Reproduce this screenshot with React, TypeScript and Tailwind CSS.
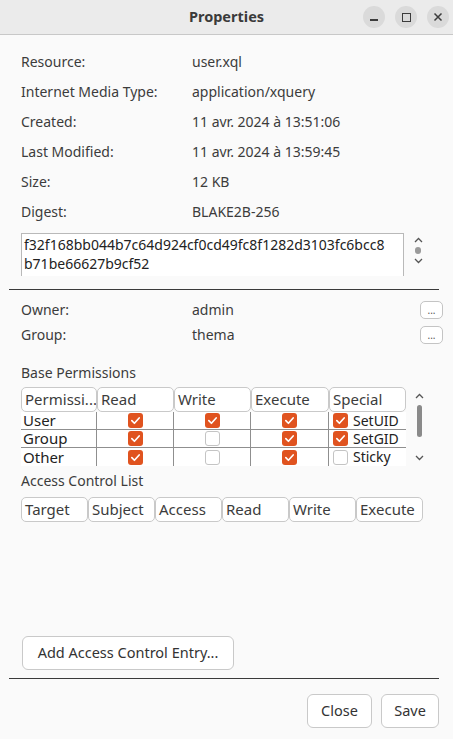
import React from 'react';

const font = { fontFamily: '"Noto Sans", "Open Sans", sans-serif' };

function Check({ on }: { on: boolean }) {
  if (!on) {
    return <span className="inline-block shrink-0 w-[15px] h-[15px] rounded-[3px] border border-[#c4c4c4] bg-white" />;
  }
  return (
    <span className="inline-flex shrink-0 w-[15px] h-[15px] rounded-[3px] bg-[#e0531f] items-center justify-center">
      <svg width="11" height="11" viewBox="0 0 12 12" fill="none">
        <path d="M2 6.2 L4.8 9 L10 3.2" stroke="white" strokeWidth="1.8" strokeLinecap="round" strokeLinejoin="round" />
      </svg>
    </span>
  );
}

function InfoRow({ label, value }: { label: string; value: string }) {
  return (
    <div className="flex items-center h-[30px]">
      <span className="w-[171px] shrink-0">{label}</span>
      <span>{value}</span>
    </div>
  );
}

function Header({ label, w }: { label: string; w: string }) {
  return (
    <div className={`${w} h-[25px] shrink-0 rounded-[5px] border border-[#c9c9c9] bg-white px-[3px] flex items-center truncate text-[15px]`}>
      {label}
    </div>
  );
}

export default function App() {
  const perms = [
    { name: 'User', r: true, w: true, x: true, s: true, sl: 'SetUID' },
    { name: 'Group', r: true, w: false, x: true, s: true, sl: 'SetGID' },
    { name: 'Other', r: true, w: false, x: true, s: false, sl: 'Sticky' },
  ];
  const permCols = ['w-[76px]', 'w-[77px]', 'w-[77px]', 'w-[78px]', 'w-[77px]'];
  const aclCols = ['Target', 'Subject', 'Access', 'Read', 'Write', 'Execute'];

  return (
    <div className="w-[453px] h-[739px] bg-[#fafafa] text-[#3c3c3c] text-[14px] flex flex-col" style={font}>
      {/* title bar */}
      <div className="h-[35px] shrink-0 bg-[#ebebeb] border-b border-[#c8c8c8] grid grid-cols-[1fr_auto_1fr] items-center">
        <div />
        <div className="font-bold text-[14.5px] text-[#3a3a3a]">Properties</div>
        <div className="flex justify-end gap-[10px] pr-[4px]">
          <button className="w-[22px] h-[22px] rounded-full bg-[#dadada] flex items-center justify-center">
            <span className="block w-[8px] h-[1.5px] bg-[#3c3c3c] mt-[6px]" />
          </button>
          <button className="w-[22px] h-[22px] rounded-full bg-[#dadada] flex items-center justify-center">
            <span className="block w-[9px] h-[9px] border-[1.5px] border-[#3c3c3c]" />
          </button>
          <button className="w-[22px] h-[22px] rounded-full bg-[#dadada] flex items-center justify-center">
            <svg width="10" height="10" viewBox="0 0 10 10">
              <path d="M1.5 1.5 L8.5 8.5 M8.5 1.5 L1.5 8.5" stroke="#3c3c3c" strokeWidth="1.5" />
            </svg>
          </button>
        </div>
      </div>

      <div className="flex-1 flex flex-col px-[9px]">
        <div className="px-[12px] pt-[11px]">
          <InfoRow label="Resource:" value="user.xql" />
          <InfoRow label="Internet Media Type:" value="application/xquery" />
          <InfoRow label="Created:" value="11 avr. 2024 à 13:51:06" />
          <InfoRow label="Last Modified:" value="11 avr. 2024 à 13:59:45" />
          <InfoRow label="Size:" value="12 KB" />
          <InfoRow label="Digest:" value="BLAKE2B-256" />

          <div className="flex mt-[7px]">
            <div className="w-[383px] h-[43px] border-t border-x border-[#b9b9b9] bg-white px-[2px] pt-[1px] leading-[19px] text-[#222] whitespace-nowrap overflow-hidden">
              <div>f32f168bb044b7c64d924cf0cd49fc8f1282d3103fc6bcc8</div>
              <div>b71be66627b9cf52</div>
            </div>
            <div className="flex-1 flex flex-col items-center pt-[4px] gap-[2px] text-[#555]">
              <svg width="9" height="6" viewBox="0 0 9 6"><path d="M1 5 L4.5 1.5 L8 5" stroke="#555" strokeWidth="1.3" fill="none" /></svg>
              <span className="block w-[6px] h-[7px] rounded-full bg-[#9a9a9a] my-[2px]" />
              <svg width="9" height="6" viewBox="0 0 9 6"><path d="M1 1 L4.5 4.5 L8 1" stroke="#555" strokeWidth="1.3" fill="none" /></svg>
            </div>
          </div>
        </div>

        <div className="h-px bg-[#3a3a3a] mt-[13px] mr-[5px]" />

        <div className="pl-[12px] pr-[1px] pt-[7px]">
          {['Owner:|admin', 'Group:|thema'].map((row) => {
            const [l, v] = row.split('|');
            return (
              <div key={l} className="flex items-center h-[25px]">
                <span className="w-[171px] shrink-0">{l}</span>
                <span className="flex-1">{v}</span>
                <button className="w-[23px] h-[18px] rounded-[5px] border border-[#c4c4c4] bg-white text-[10px] leading-[10px] text-[#555] flex items-end justify-center pb-[3px]">
                  ...
                </button>
              </div>
            );
          })}
        </div>

        <div className="px-[12px]">
          <div className="mt-[15px] h-[20px] flex items-center">Base Permissions</div>

          <div className="flex mt-[5px]">
            <div className="w-[385px] flex flex-col">
              <div className="flex">
                {['Permissions', 'Read', 'Write', 'Execute', 'Special'].map((h, i) => (
                  <Header key={h} label={h === 'Permissions' ? 'Permissi...' : h} w={permCols[i]} />
                ))}
              </div>
              <div className="bg-white text-[15px] text-[#222]">
                {perms.map((p, ri) => (
                  <div key={p.name} className={`flex h-[18px] ${ri < 2 ? 'border-b border-[#8f8f8f]' : ''}`}>
                    <div className="w-[76px] border-r border-[#8f8f8f] pl-[2px] flex items-center leading-none">{p.name}</div>
                    <div className="w-[77px] border-r border-[#8f8f8f] flex items-center justify-center"><Check on={p.r} /></div>
                    <div className="w-[77px] border-r border-[#8f8f8f] flex items-center justify-center"><Check on={p.w} /></div>
                    <div className="w-[78px] border-r border-[#8f8f8f] flex items-center justify-center"><Check on={p.x} /></div>
                    <div className="w-[77px] flex items-center gap-[5px] pl-[4px] leading-none text-[14px] whitespace-nowrap overflow-hidden"><Check on={p.s} />{p.sl}</div>
                  </div>
                ))}
              </div>
            </div>
            <div className="flex-1 flex flex-col items-center pt-[6px]">
              <svg width="9" height="6" viewBox="0 0 9 6"><path d="M1 5 L4.5 1.5 L8 5" stroke="#555" strokeWidth="1.3" fill="none" /></svg>
              <span className="block w-[5px] h-[32px] rounded-full bg-[#8a8a8a] mt-[6px]" />
              <svg className="mt-[18px]" width="9" height="6" viewBox="0 0 9 6"><path d="M1 1 L4.5 4.5 L8 1" stroke="#555" strokeWidth="1.3" fill="none" /></svg>
            </div>
          </div>

          <div className="mt-[4px] h-[20px] flex items-center">Access Control List</div>
          <div className="flex mt-[7px]">
            {aclCols.map((h) => (
              <Header key={h} label={h} w="w-[67px]" />
            ))}
          </div>
        </div>

        <div className="flex-1" />

        <div className="px-[13px]">
          <button className="h-[34px] w-[212px] rounded-[6px] border border-[#c9c9c9] bg-white text-[14.5px] text-[#333]">
            Add Access Control Entry...
          </button>
        </div>

        <div className="h-px bg-[#3a3a3a] mt-[8px] mr-[5px]" />

        <div className="flex justify-end gap-[9px] pr-[5px] pt-[15px] pb-[11px]">
          <button className="h-[34px] w-[65px] rounded-[6px] border border-[#c9c9c9] bg-white text-[14.5px] text-[#333]">Close</button>
          <button className="h-[34px] w-[58px] rounded-[6px] border border-[#c9c9c9] bg-white text-[14.5px] text-[#333]">Save</button>
        </div>
      </div>
    </div>
  );
}
